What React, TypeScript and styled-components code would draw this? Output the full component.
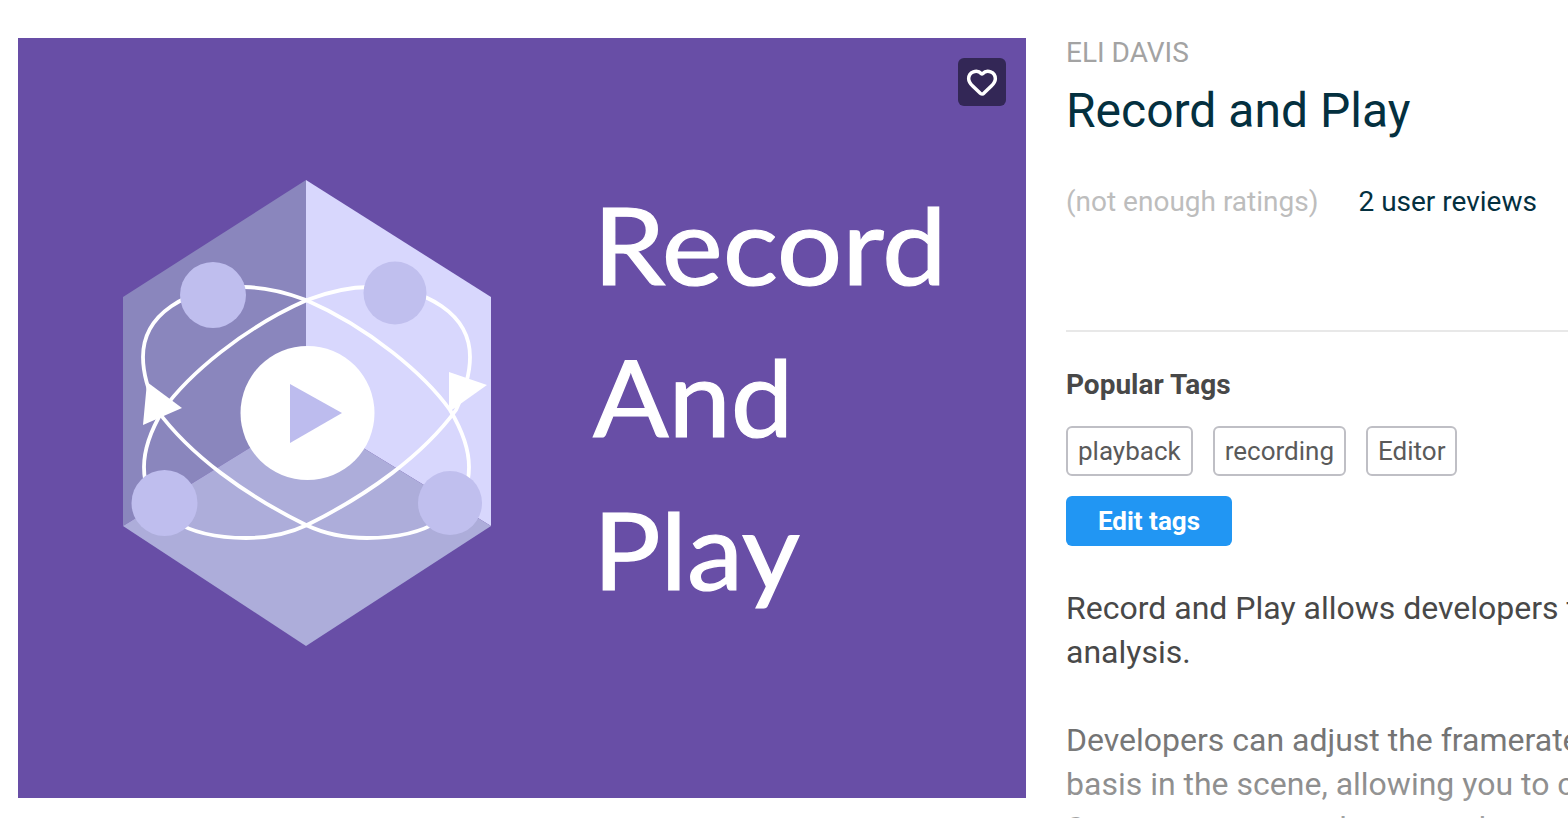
import React from 'react';
import styled, { createGlobalStyle } from 'styled-components';
import { Heart } from 'lucide-react';

const GlobalStyle = createGlobalStyle`
  html, body {
    margin: 0;
    height: 818px;
    overflow: hidden;
    background: #fff;
    font-family: Roboto, "Liberation Sans", sans-serif;
  }
`;

const Page = styled.div`
  display: flex;
  align-items: flex-start;
  gap: 40px;
  width: 1568px;
  height: 818px;
  padding: 38px 0 0 18px;
  box-sizing: border-box;
  overflow: hidden;
`;

const Hero = styled.div`
  position: relative;
  flex: 0 0 1008px;
  height: 760px;
  background: #684ea6;
`;

const HeroArt = styled.svg`
  display: block;
  width: 1008px;
  height: 760px;
  filter: blur(0.5px);
`;

const FavButton = styled.button`
  position: absolute;
  top: 20px;
  right: 20px;
  width: 48px;
  height: 48px;
  padding: 0;
  border: 0;
  border-radius: 6px;
  background: #332756;
  color: #fff;
  display: flex;
  align-items: center;
  justify-content: center;
`;

const Details = styled.div`
  flex: 0 0 620px;
  display: flex;
  flex-direction: column;
`;

const Publisher = styled.div`
  font-size: 28px;
  line-height: 30px;
  color: #a3a3a3;
`;

const Title = styled.h1`
  margin: 15px 0 0;
  font-size: 48px;
  line-height: 56px;
  font-weight: 400;
  color: #04303f;
`;

const RatingRow = styled.div`
  display: flex;
  gap: 40px;
  margin-top: 43px;
  font-size: 28px;
  line-height: 40px;
`;

const NoRatings = styled.span`
  color: #bdbdbd;
`;

const Reviews = styled.span`
  color: #04303f;
`;

const Divider = styled.div`
  height: 2px;
  margin-top: 108px;
  background: #e8e8e8;
`;

const SectionTitle = styled.h2`
  margin: 36px 0 0;
  font-size: 28px;
  line-height: 34px;
  font-weight: 700;
  color: #484848;
`;

const TagRow = styled.div`
  display: flex;
  gap: 20px;
  margin-top: 24px;
`;

const Tag = styled.span`
  display: block;
  height: 50px;
  padding: 0 10px;
  box-sizing: border-box;
  border: 2px solid #bfbfc5;
  border-radius: 6px;
  font-size: 26px;
  line-height: 46px;
  color: #5a5a5a;
`;

const EditButton = styled.button`
  width: 166px;
  height: 50px;
  margin-top: 20px;
  padding: 0;
  border: 0;
  border-radius: 6px;
  background: #2196f3;
  color: #fff;
  font-family: inherit;
  font-size: 26px;
  font-weight: 700;
`;

const Description = styled.div`
  position: relative;
  margin-top: 40px;
  font-size: 32px;
  line-height: 44px;
  white-space: nowrap;
  color: #484848;

  /* collapsed text fades out towards the bottom */
  &::after {
    content: '';
    position: absolute;
    left: 0;
    right: 0;
    top: 74px;
    height: 320px;
    background: linear-gradient(rgba(255, 255, 255, 0), #fff);
  }
`;

const Paragraph = styled.p`
  margin: 0 0 44px;
`;

const orbit =
  'M143 357C143 315 185 287 243 287C265 287 285 292 306 300C370 328 425 375 450 410C462 430 469 448 469 467C469 515 425 538 367 538C345 538 325 534 306 525C245 495 190 455 157 410C150 395 143 375 143 357Z';

const artLines = [
  { label: 'Record', y: 285, scale: 1.08 },
  { label: 'And', y: 437, scale: 1.045 },
  { label: 'Play', y: 590, scale: 1.055 },
];

// viewBox starts at the hero's page offset so the numbers read as screen coordinates
const Artwork = () => (
  <HeroArt viewBox="18 38 1008 760">
    <polygon points="306,180 306,413 123,526 123,297" fill="#8a86bd" />
    <polygon points="306,180 491,297 491,526 306,413" fill="#d8d7fd" />
    <polygon points="306,413 491,526 306,646 123,526" fill="#adadda" />
    <path d={orbit} fill="none" stroke="#fff" strokeWidth="3.8" />
    <path d={orbit} fill="none" stroke="#fff" strokeWidth="3.8" transform="matrix(-1 0 0 1 613 0)" />
    <polygon points="147,382 182,408 143,425" fill="#fff" />
    <polygon points="449,372 487,385 449,412" fill="#fff" />
    <circle cx="213" cy="295" r="33" fill="#bfbeee" />
    <circle cx="395" cy="293" r="31.5" fill="#c0bfee" />
    <circle cx="164.5" cy="503" r="33" fill="#bfbeee" />
    <circle cx="450" cy="503" r="32" fill="#c0bfee" />
    <circle cx="307.5" cy="413" r="67" fill="#fff" />
    <polygon points="290,384 342,413 290,443" fill="#bdbcee" />
    <g fill="#fff" stroke="#fff" strokeWidth="1.2" fontFamily="Lato, 'Open Sans', sans-serif" fontSize="107">
      {artLines.map((line) => (
        <text
          key={line.label}
          y={line.y}
          transform={`matrix(${line.scale} 0 0 1 593 0)`}
        >
          {line.label}
        </text>
      ))}
    </g>
  </HeroArt>
);

export default function App() {
  return (
    <>
      <GlobalStyle />
      <Page>
        <Hero>
          <Artwork />
          <FavButton aria-label="Add to favourites">
            <Heart size={32} strokeWidth={2.6} />
          </FavButton>
        </Hero>
        <Details>
          <Publisher>ELI DAVIS</Publisher>
          <Title>Record and Play</Title>
          <RatingRow>
            <NoRatings>(not enough ratings)</NoRatings>
            <Reviews>2 user reviews</Reviews>
          </RatingRow>
          <Divider />
          <SectionTitle>Popular Tags</SectionTitle>
          <TagRow>
            <Tag>playback</Tag>
            <Tag>recording</Tag>
            <Tag>Editor</Tag>
          </TagRow>
          <EditButton>Edit tags</EditButton>
          <Description>
            <Paragraph>
              Record and Play allows developers to
              <br />
              analysis.
            </Paragraph>
            <Paragraph>
              Developers can adjust the framerate
              <br />
              basis in the scene, allowing you to capture
              <br />
              Scenes are run on demo one by one to
            </Paragraph>
          </Description>
        </Details>
      </Page>
    </>
  );
}
